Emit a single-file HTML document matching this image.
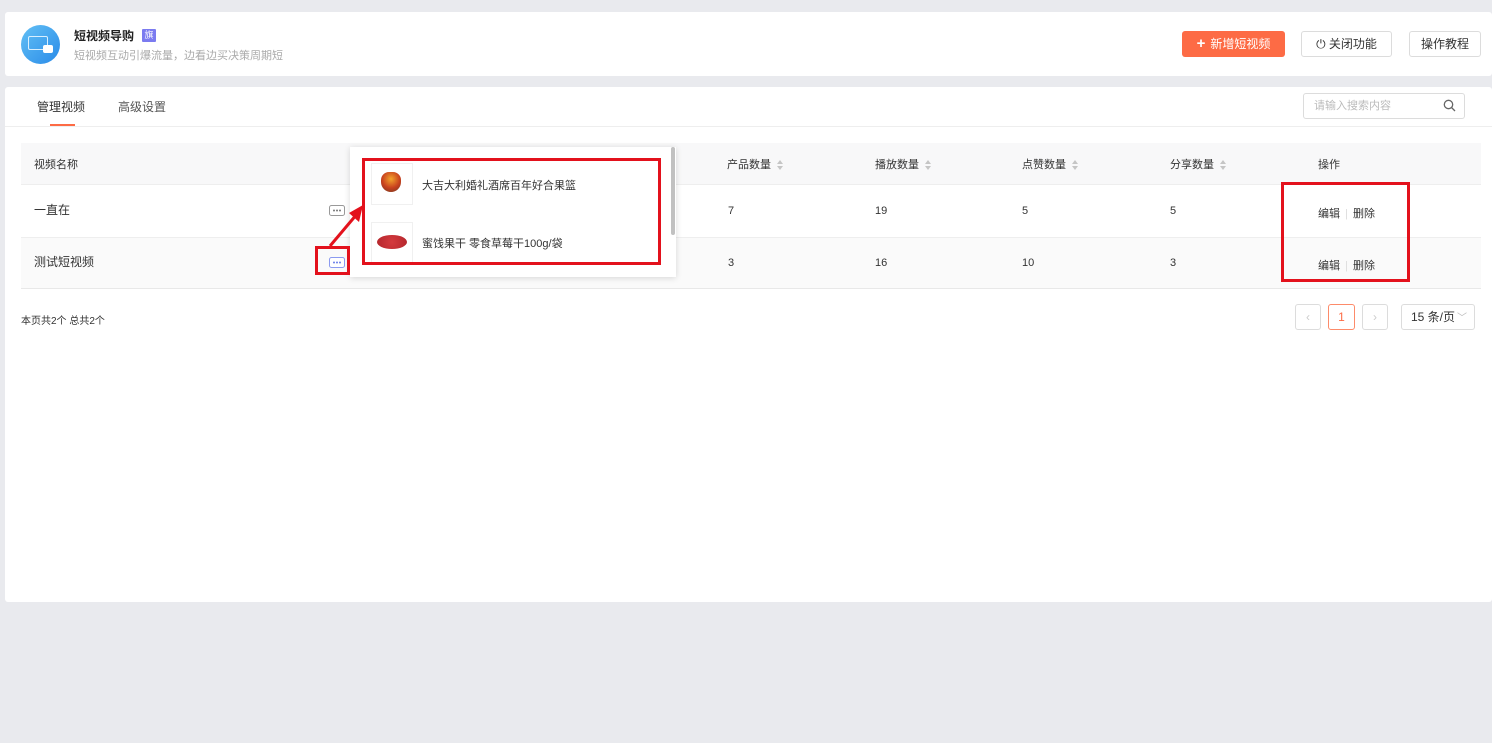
<!DOCTYPE html>
<html><head><meta charset="utf-8"><style>
*{margin:0;padding:0;box-sizing:border-box}
body{width:1492px;height:743px;background:#e9eaee;font-family:"Liberation Sans","Noto Sans CJK SC",sans-serif;font-size:11px;color:#333;position:relative;overflow:hidden}
.a{position:absolute}
.card{background:#fff;border-radius:3px}
.btn{position:absolute;border:1px solid #dcdcdc;border-radius:3px;background:#fff;font-size:12px;color:#333;text-align:center;line-height:24px}
.th{position:absolute;top:156px;font-size:11px;color:#333}
.td{position:absolute;font-size:11px;color:#333}
.sort{display:inline-block;margin-left:6px;vertical-align:middle;width:6px;height:10px;position:relative}
.sort:before{content:"";position:absolute;top:0;left:0;border:3px solid transparent;border-bottom:4px solid #c5c5c5;border-top:0}
.sort:after{content:"";position:absolute;bottom:0;left:0;border:3px solid transparent;border-top:4px solid #c5c5c5;border-bottom:0}
.red{position:absolute;border:3px solid #e3111c}
</style></head><body>
<div class="a card" style="left:5px;top:12px;width:1487px;height:64px"></div>
<div class="a" style="left:21px;top:25px;width:39px;height:39px;border-radius:50%;background:linear-gradient(135deg,#62c0f5,#2a8be8)"></div>
<div class="a" style="left:28px;top:36px;width:20px;height:14px;border:1.5px solid #d8efff;border-radius:2px"></div>
<div class="a" style="left:43px;top:45px;width:10px;height:8px;background:#fff;border-radius:2px"></div>
<div class="a" style="left:74px;top:27px;font-size:12px;font-weight:bold;color:#222">短视频导购</div>
<div class="a" style="left:142px;top:29px;width:14px;height:13px;background:#7b7bf0;color:#fff;font-size:9px;text-align:center;line-height:13px;border-radius:1px">旗</div>
<div class="a" style="left:74px;top:47px;font-size:11px;color:#aaa">短视频互动引爆流量，边看边买决策周期短</div>
<div class="a" style="left:1182px;top:31px;width:103px;height:26px;background:#fd6b45;border-radius:3px;color:#fff;font-size:12px;line-height:26px;text-align:center"><b style="font-size:15px;margin-right:5px">+</b>新增短视频</div>
<div class="btn" style="left:1301px;top:31px;width:91px;height:26px">⏻ 关闭功能</div>
<div class="btn" style="left:1409px;top:31px;width:72px;height:26px">操作教程</div>

<div class="a card" style="left:5px;top:87px;width:1487px;height:515px"></div>
<div class="a" style="left:37px;top:98px;font-size:12px;color:#333">管理视频</div>
<div class="a" style="left:50px;top:124px;width:25px;height:2px;background:#fd6b45"></div>
<div class="a" style="left:118px;top:98px;font-size:12px;color:#555">高级设置</div>
<div class="a" style="left:5px;top:126px;width:1487px;height:1px;background:#eee"></div>
<div class="a" style="left:1303px;top:93px;width:162px;height:26px;border:1px solid #dcdcdc;border-radius:3px;color:#bbb;font-size:11px;line-height:24px;padding-left:10px">请输入搜索内容</div>
<svg class="a" style="left:1443px;top:99px" width="13" height="13" viewBox="0 0 13 13"><circle cx="5.5" cy="5.5" r="4.2" fill="none" stroke="#666" stroke-width="1.3"/><path d="M8.5 8.5L12 12" stroke="#666" stroke-width="1.3"/></svg>

<div class="a" style="left:21px;top:143px;width:1460px;height:42px;background:#f8f8f9;border-bottom:1px solid #eee"></div>
<div class="a" style="left:21px;top:237px;width:1460px;height:52px;background:#fafafa;border-top:1px solid #eee;border-bottom:1px solid #e8e8e8"></div>
<div class="th" style="left:34px">视频名称</div>
<div class="th" style="left:727px">产品数量<span class="sort"></span></div>
<div class="th" style="left:875px">播放数量<span class="sort"></span></div>
<div class="th" style="left:1022px">点赞数量<span class="sort"></span></div>
<div class="th" style="left:1170px">分享数量<span class="sort"></span></div>
<div class="th" style="left:1318px">操作</div>

<div class="td" style="left:34px;top:201px;font-size:12px">一直在</div>
<svg class="a" style="left:329px;top:205px" width="16" height="11"><rect x="0.5" y="0.5" width="15" height="10" rx="2" fill="#fff" stroke="#999"/><circle cx="5" cy="5.5" r="1" fill="#777"/><circle cx="8" cy="5.5" r="1" fill="#777"/><circle cx="11" cy="5.5" r="1" fill="#777"/></svg>
<div class="td" style="left:728px;top:205px">7</div>
<div class="td" style="left:875px;top:205px">19</div>
<div class="td" style="left:1022px;top:205px">5</div>
<div class="td" style="left:1170px;top:205px">5</div>
<div class="td" style="left:1318px;top:205px">编辑 <span style="color:#ddd;margin:0 2px">|</span> 删除</div>

<div class="td" style="left:34px;top:253px;font-size:12px">测试短视频</div>
<svg class="a" style="left:329px;top:257px" width="16" height="11"><rect x="0.5" y="0.5" width="15" height="10" rx="2" fill="#fff" stroke="#8b9af0"/><circle cx="5" cy="5.5" r="1" fill="#6a7fe8"/><circle cx="8" cy="5.5" r="1" fill="#6a7fe8"/><circle cx="11" cy="5.5" r="1" fill="#6a7fe8"/></svg>
<div class="td" style="left:728px;top:257px">3</div>
<div class="td" style="left:875px;top:257px">16</div>
<div class="td" style="left:1022px;top:257px">10</div>
<div class="td" style="left:1170px;top:257px">3</div>
<div class="td" style="left:1318px;top:257px">编辑 <span style="color:#ddd;margin:0 2px">|</span> 删除</div>

<div class="a" style="left:350px;top:147px;width:326px;height:130px;background:#fff;box-shadow:0 1px 6px rgba(0,0,0,.15)"></div>
<div class="a" style="left:671px;top:147px;width:4px;height:88px;background:#c1c1c1;border-radius:2px"></div>
<div class="a" style="left:371px;top:163px;width:42px;height:42px;border:1px solid #f0f0f0"></div>
<div class="a" style="left:381px;top:172px;width:20px;height:20px;border-radius:40% 40% 50% 50%;background:radial-gradient(circle at 50% 35%,#f3a32c,#c8401e 55%,#6b3a20)"></div>
<div class="a" style="left:422px;top:177px;font-size:11px">大吉大利婚礼酒席百年好合果篮</div>
<div class="a" style="left:371px;top:222px;width:42px;height:42px;border:1px solid #f0f0f0"></div>
<div class="a" style="left:377px;top:235px;width:30px;height:14px;border-radius:50%;background:radial-gradient(circle,#d43a3e,#b3262c)"></div>
<div class="a" style="left:422px;top:235px;font-size:11px">蜜饯果干 零食草莓干100g/袋</div>

<div class="red" style="left:362px;top:158px;width:299px;height:107px"></div>
<div class="red" style="left:315px;top:246px;width:35px;height:29px"></div>
<div class="red" style="left:1281px;top:182px;width:129px;height:100px"></div>
<svg class="a" style="left:325px;top:200px" width="45" height="50"><path d="M5 46L32 14" stroke="#e3111c" stroke-width="3"/><path d="M38 5L24 13L34 22Z" fill="#e3111c"/></svg>

<div class="a" style="left:21px;top:312px;font-size:10px;color:#333">本页共2个 总共2个</div>
<div class="btn" style="left:1295px;top:304px;width:26px;height:26px;color:#ccc">‹</div>
<div class="btn" style="left:1328px;top:304px;width:27px;height:26px;border-color:#fd8b6a;color:#fd6b45">1</div>
<div class="btn" style="left:1362px;top:304px;width:26px;height:26px;color:#ccc">›</div>
<div class="btn" style="left:1401px;top:304px;width:74px;height:26px;text-align:left;padding-left:9px">15 条/页<span style="color:#bbb;font-size:10px;margin-left:2px">﹀</span></div>
</body></html>
